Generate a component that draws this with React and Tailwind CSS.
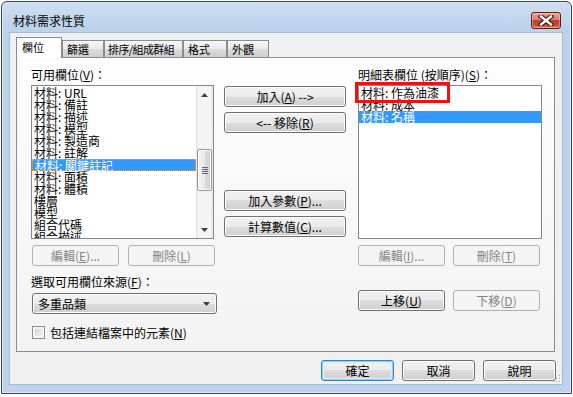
import React from 'react';

const U = ({ c }) => <span className="underline">{c}</span>;

function Btn({ children, className = '', disabled = false, def = false }) {
  const base =
    'flex items-center justify-center h-[21px] rounded-[3px] border text-[12px] leading-none whitespace-nowrap';
  const look = disabled
    ? 'border-[#adb2b5] bg-[#f4f4f4] text-[#838383]'
    : def
    ? 'border-[#3c7fb1] bg-[linear-gradient(#f2f2f2,#ebebeb_50%,#dddddd_50%,#cfcfcf)] text-black shadow-[inset_0_0_0_1px_#8fd3f5,inset_0_0_0_2px_#d9f1fc]'
    : 'border-[#707070] bg-[linear-gradient(#f2f2f2,#ebebeb_50%,#dddddd_50%,#cfcfcf)] text-black shadow-[inset_0_0_0_1px_#fbfbfb]';
  return <div className={`${base} ${look} ${className}`}>{children}</div>;
}

function Row({ text, sel = false, focus = false }) {
  if (sel) {
    return (
      <div
        className={`h-[12px] leading-[11px] pl-[2px] bg-[#3399ff] text-white whitespace-nowrap ${
          focus ? 'border border-dotted border-[#f5a623] pl-[1px]' : ''
        }`}
      >
        {text}
      </div>
    );
  }
  return <div className="h-[12px] leading-[12px] pl-[2px] whitespace-nowrap">{text}</div>;
}

function Arrow({ down = false }) {
  return (
    <svg width="7" height="4" viewBox="0 0 7 4">
      {down ? (
        <path d="M0 0 H7 L3.5 4 Z" fill="#404040" />
      ) : (
        <path d="M0 4 H7 L3.5 0 Z" fill="#404040" />
      )}
    </svg>
  );
}

function Tab({ children, sel = false, w, extra = '' }) {
  return (
    <div
      className={
        sel
          ? `${w} h-[21px] -mb-[1px] relative z-10 bg-white border border-b-0 border-[#898c95] pl-[5px] pt-[3px] text-[11px] leading-[13px] whitespace-nowrap ${extra}`
          : `${w} h-[17px] bg-[linear-gradient(#f3f3f3,#ebebeb_50%,#dddddd_50%,#cfcfcf)] border border-b-0 border-[#898c95] pl-[4px] pt-[2px] text-[11px] leading-[13px] whitespace-nowrap shadow-[inset_0_1px_0_#fbfbfb] ${extra}`
      }
    >
      {children}
    </div>
  );
}

export default function App() {
  const leftItems = [
    '材料: URL',
    '材料: 備註',
    '材料: 描述',
    '材料: 模型',
    '材料: 製造商',
    '材料: 註解',
    '材料: 關鍵註記',
    '材料: 面積',
    '材料: 體積',
    '樓層',
    '模型',
    '組合代碼',
    '組合描述',
  ];

  return (
    <div className="w-[573px] h-[397px] bg-white font-['Noto_Sans_CJK_TC','Noto_Sans_CJK_JP',sans-serif] text-[12px] text-black overflow-hidden">
      <div className="ml-[1px] mt-[1px] w-[571px] h-[393px] rounded-t-[6px] border border-[#3a4654] bg-[linear-gradient(#cfdff1,#bad2eb_28px,#bcd3eb)] shadow-[inset_0_0_0_1px_#dbe7f5] flex flex-col">
        {/* Title bar */}
        <div className="h-[30px] flex items-start">
          <div className="ml-[11px] mt-[11px] text-[12px] leading-[16px] text-black">材料需求性質</div>
          <div className="ml-auto mr-[10px] mt-[10px] w-[30px] h-[17px] rounded-[3px] border border-[#5a1d18] bg-[linear-gradient(#e6a597,#d57d6f_45%,#c1402f_50%,#c44a38_80%,#dc8068)] shadow-[inset_0_0_0_1px_rgba(255,255,255,0.35)] flex items-center justify-center">
            <svg width="16" height="11" viewBox="0 0 16 11">
              <path d="M3 1.5 L13 9.5 M13 1.5 L3 9.5" stroke="#3b1512" strokeWidth="4.6" strokeLinecap="square" />
              <path d="M3 1.5 L13 9.5 M13 1.5 L3 9.5" stroke="#ffffff" strokeWidth="2.4" strokeLinecap="square" />
            </svg>
          </div>
        </div>

        {/* Client area */}
        <div className="relative ml-[7px] w-[554px] h-[353px] bg-[#f0f0f0] border border-[#a6bbd3] flex flex-col">
          {/* Tabs */}
          <div className="mt-[4px] ml-[6px] h-[20px] flex items-end">
            <Tab sel w="w-[46px]">欄位</Tab>
            <Tab w="w-[42px]">篩選</Tab>
            <Tab w="w-[79px]" extra="tracking-[-0.6px] !pl-[3px]">排序/組成群組</Tab>
            <Tab w="w-[44px]">格式</Tab>
            <Tab w="w-[42px]">外觀</Tab>
          </div>

          {/* Panel */}
          <div className="ml-[6px] w-[539px] h-[295px] border border-[#898c95] bg-[linear-gradient(#fdfdfd,#f3f3f3)] pl-[14px] pt-[11px] flex">
            {/* Left column */}
            <div className="w-[184px] flex flex-col">
              <div className="h-[12px] leading-[12px] whitespace-nowrap">
                可用欄位(<U c="V" />)：
              </div>
              <div className="mt-[4px] h-[154px] w-[183px] border border-[#828790] bg-white flex overflow-hidden">
                <div className="flex-1 pt-[1px] overflow-hidden">
                  {leftItems.map((t, i) => (
                    <Row key={i} text={t} sel={i === 6} focus={i === 6} />
                  ))}
                </div>
                <div className="w-[17px] h-full flex flex-col bg-[linear-gradient(90deg,#e2e2e2,#f4f4f4_15%,#f4f4f4_85%,#e6e6e6)]">
                  <div className="h-[17px] flex items-center justify-center">
                    <Arrow />
                  </div>
                  <div className="flex-1 pt-[46px]">
                    <div className="mx-[1px] h-[42px] rounded-[2px] border border-[#979797] bg-[linear-gradient(90deg,#f4f4f4,#e9e9e9_50%,#d9d9d9_50%,#d2d2d2)] shadow-[inset_0_0_0_1px_#fafafa] flex flex-col items-center justify-center gap-[1px]">
                      <div className="w-[6px] h-[1px] bg-[#6a6a6a]" />
                      <div className="w-[6px] h-[1px] bg-[#6a6a6a]" />
                      <div className="w-[6px] h-[1px] bg-[#6a6a6a]" />
                      <div className="w-[6px] h-[1px] bg-[#6a6a6a]" />
                    </div>
                  </div>
                  <div className="h-[17px] flex items-center justify-center">
                    <Arrow down />
                  </div>
                </div>
              </div>
              <div className="mt-[6px] flex justify-between">
                <Btn disabled className="ml-[1px] w-[87px]">
                  編輯(<U c="E" />)...
                </Btn>
                <Btn disabled className="w-[87px]">
                  刪除(<U c="L" />)
                </Btn>
              </div>
              <div className="mt-[10px] h-[12px] leading-[12px] whitespace-nowrap">
                選取可用欄位來源(<U c="F" />)：
              </div>
              <div className="mt-[5px] ml-[1px] w-[185px] h-[21px] rounded-[3px] border border-[#707070] bg-[linear-gradient(#f2f2f2,#ebebeb_50%,#dddddd_50%,#cfcfcf)] shadow-[inset_0_0_0_1px_#fbfbfb] flex items-center pl-[5px] pr-[6px]">
                <span className="leading-none">多重品類</span>
                <span className="ml-auto flex">
                  <Arrow down />
                </span>
              </div>
              <div className="mt-[12px] ml-[1px] flex items-center h-[13px]">
                <div className="w-[13px] h-[13px] border border-[#8e8f8f] bg-[#f4f4f4] p-[2px]">
                  <div className="w-full h-full bg-[linear-gradient(135deg,#cbcfd5,#f6f6f6)]" />
                </div>
                <div className="ml-[5px] leading-[13px] whitespace-nowrap">
                  包括連結檔案中的元素(<U c="N" />)
                </div>
              </div>
            </div>

            {/* Middle column */}
            <div className="ml-[9px] w-[122px] flex flex-col">
              <Btn className="mt-[17px] w-full">
                加入(<U c="A" />) --&gt;
              </Btn>
              <Btn className="mt-[5px] w-full">
                &lt;-- 移除(<U c="R" />)
              </Btn>
              <Btn className="mt-[57px] w-full">
                加入參數(<U c="P" />)...
              </Btn>
              <Btn className="mt-[5px] w-full">
                計算數值(<U c="C" />)...
              </Btn>
            </div>

            {/* Right column */}
            <div className="ml-[12px] w-[184px] flex flex-col">
              <div className="h-[12px] leading-[12px] whitespace-nowrap">
                明細表欄位 (按順序)(<U c="S" />)：
              </div>
              <div className="relative mt-[4px] h-[154px] w-[184px]">
                <div className="h-full w-full border border-[#828790] bg-white pt-[1px] overflow-hidden">
                  <Row text="材料: 作為油漆" />
                  <Row text="材料: 成本" />
                  <Row text="材料: 名稱" sel />
                </div>
                <div className="absolute left-[-3px] top-[-3px] w-[95px] h-[21px] border-[3px] border-[#ee1111]" />
              </div>
              <div className="mt-[6px] flex gap-[8px]">
                <Btn disabled className="w-[87px]">
                  編輯(<U c="I" />)...
                </Btn>
                <Btn disabled className="w-[87px]">
                  刪除(<U c="T" />)
                </Btn>
              </div>
              <div className="mt-[24px] flex gap-[8px]">
                <Btn className="w-[87px]">
                  上移(<U c="U" />)
                </Btn>
                <Btn disabled className="w-[87px]">
                  下移(<U c="D" />)
                </Btn>
              </div>
            </div>
          </div>

          {/* Bottom buttons */}
          <div className="mt-[8px] pr-[6px] flex justify-end gap-[8px]">
            <Btn def className="w-[73px]">確定</Btn>
            <Btn className="w-[73px]">取消</Btn>
            <Btn className="w-[73px]">說明</Btn>
          </div>

          {/* size grip */}
          <svg className="absolute right-[1px] bottom-[1px]" width="9" height="9" viewBox="0 0 9 9">
            {[
              [7, 1],
              [7, 4],
              [4, 4],
              [7, 7],
              [4, 7],
              [1, 7],
            ].map(([x, y], i) => (
              <g key={i}>
                <rect x={x + 1} y={y + 1} width="1" height="1" fill="#ffffff" />
                <rect x={x} y={y} width="1" height="1" fill="#a0a0a0" />
              </g>
            ))}
          </svg>
        </div>
      </div>
    </div>
  );
}
